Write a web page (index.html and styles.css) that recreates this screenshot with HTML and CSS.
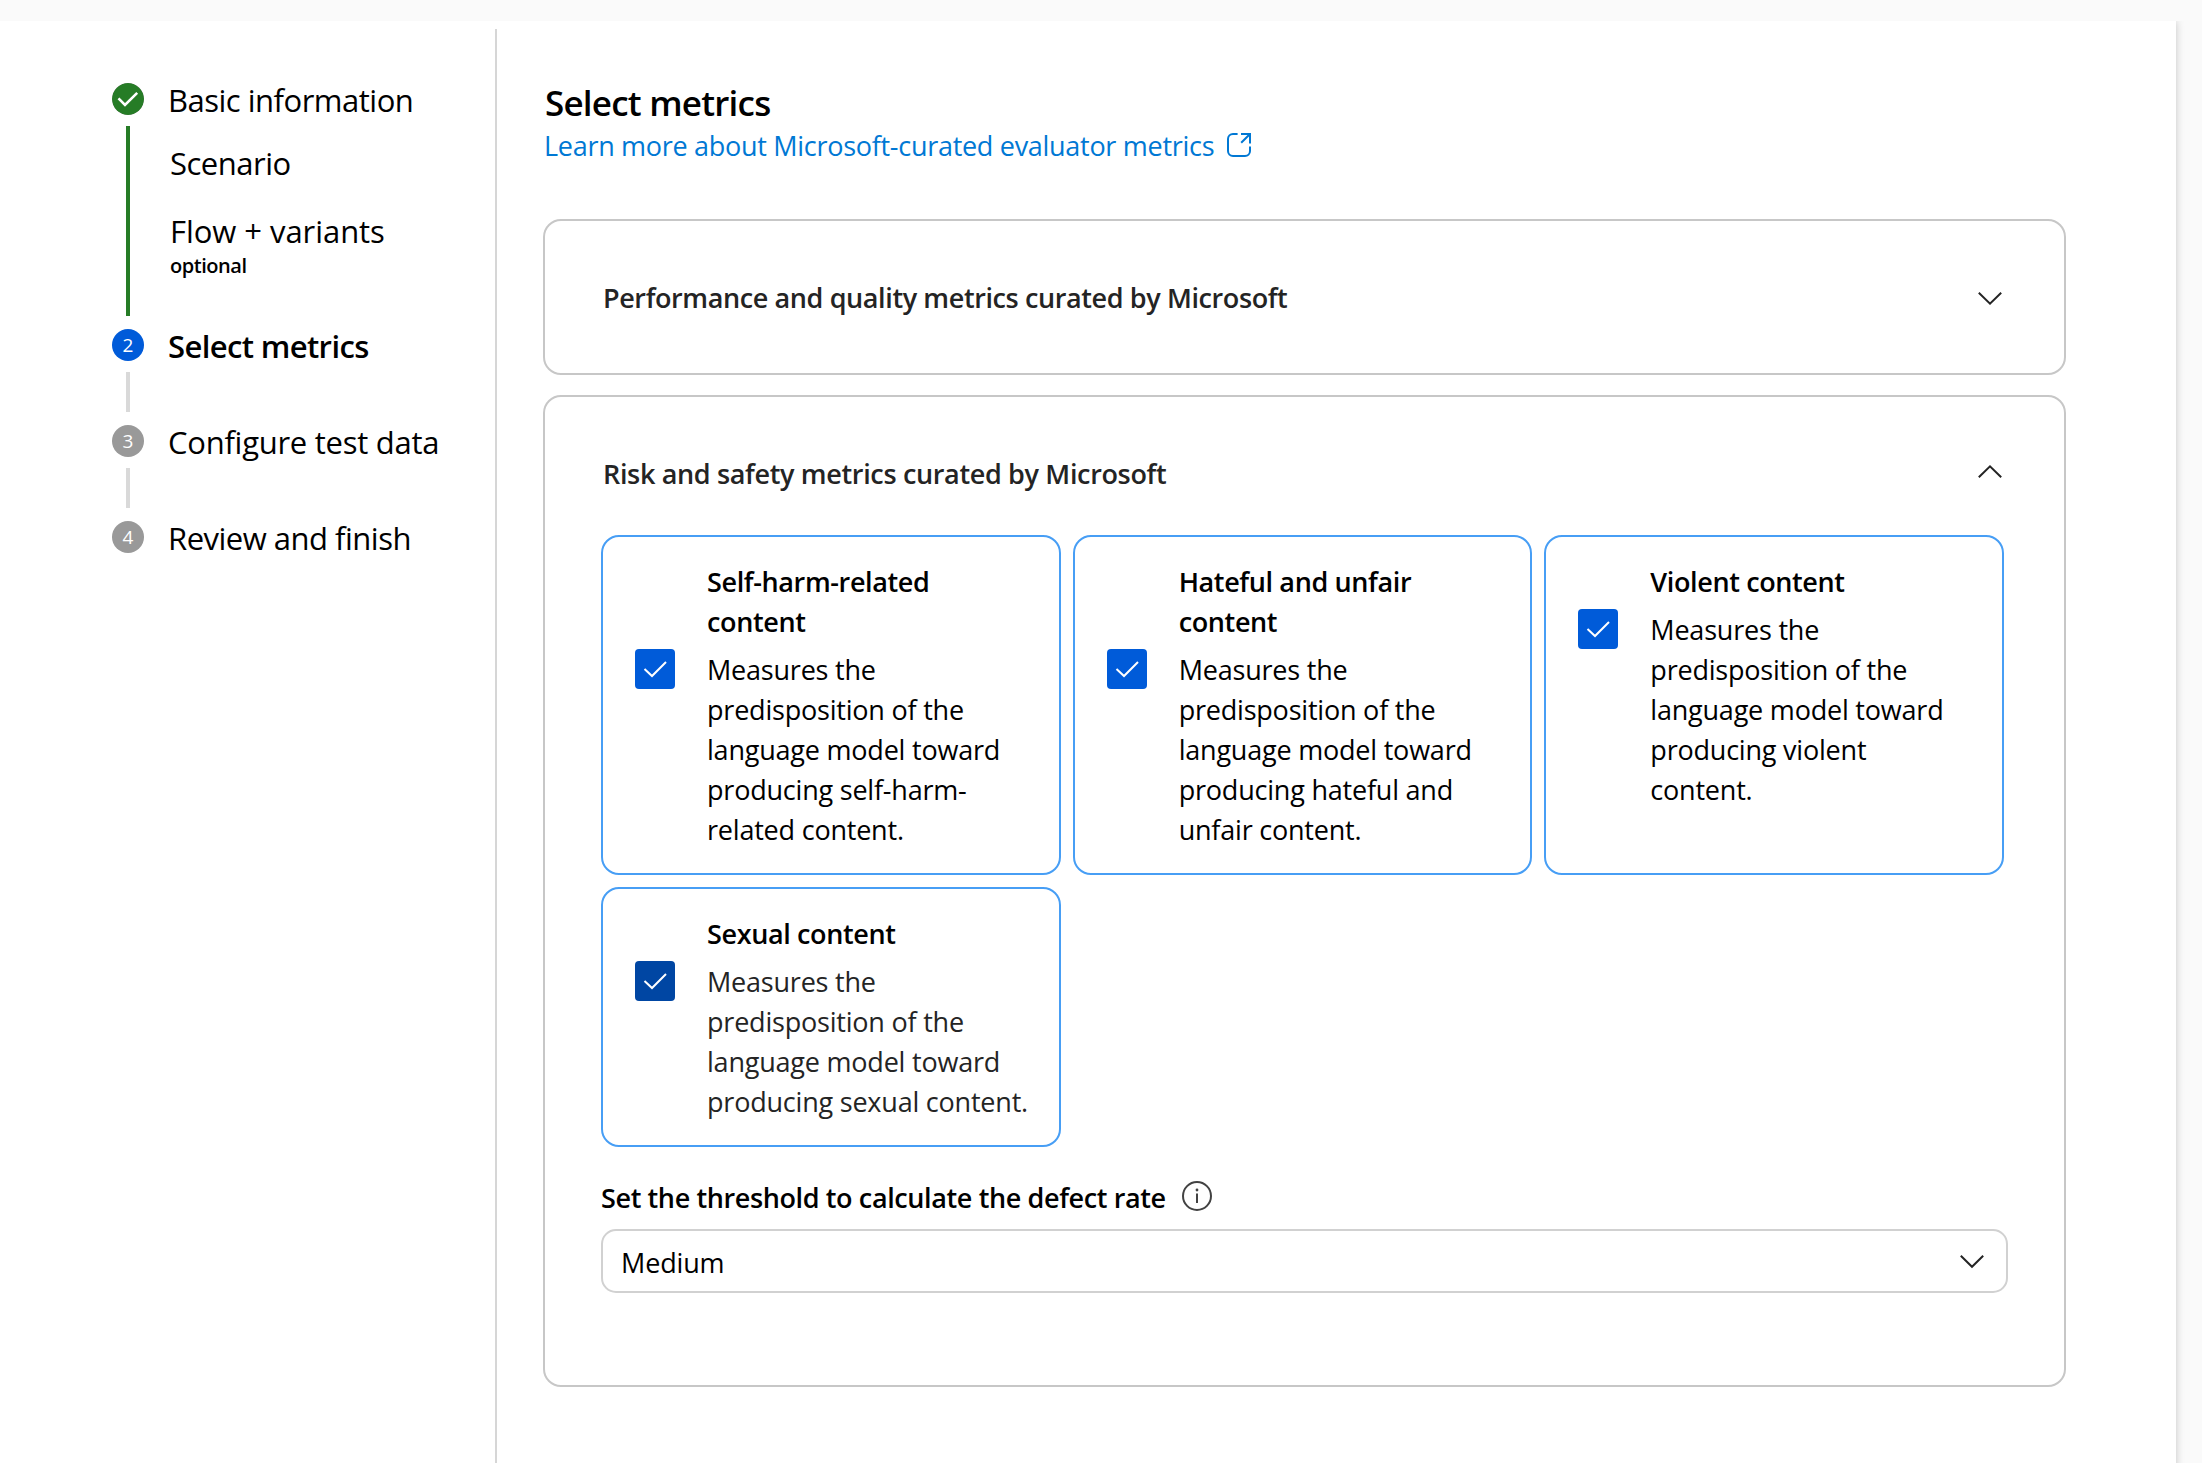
FILE: index.html
```html
<!DOCTYPE html>
<html lang="en">
<head>
<meta charset="utf-8">
<title>Select metrics</title>
<link rel="stylesheet" href="styles.css">
</head>
<body>
<div class="panel">
  <nav class="steps">
    <div class="step done">
      <div class="marker">
        <svg class="dot" width="32" height="32" viewBox="0 0 32 32"><circle cx="16" cy="16" r="16" fill="#267c26"/><path d="M6.5 15.3 L13 22 L25.2 9.8" fill="none" stroke="#fff" stroke-width="2.6"/></svg>
        <span class="line"></span>
      </div>
      <div class="step-body">
        <div class="label">Basic information</div>
        <div class="sub scenario">Scenario</div>
        <div class="sub flow">Flow + variants</div>
        <div class="hint">optional</div>
      </div>
    </div>
    <div class="step current">
      <div class="marker"><span class="dot">2</span><span class="line"></span></div>
      <div class="step-body"><div class="label">Select metrics</div></div>
    </div>
    <div class="step">
      <div class="marker"><span class="dot">3</span><span class="line"></span></div>
      <div class="step-body"><div class="label wide">Configure test data</div></div>
    </div>
    <div class="step last">
      <div class="marker"><span class="dot">4</span></div>
      <div class="step-body"><div class="label">Review and finish</div></div>
    </div>
  </nav>

  <main class="main">
    <h1>Select metrics</h1>
    <a class="learn"><span class="text">Learn more about Microsoft-curated evaluator metrics</span><svg width="26" height="26" viewBox="0 0 26 26" fill="none" stroke="#0078d4" stroke-width="2"><path d="M11.6 2 H7 A5 5 0 0 0 2 7 V19 A5 5 0 0 0 7 24 H19 A5 5 0 0 0 24 19 V14.4"/><path d="M15 2 H24 V11.6 M24 2 L15.2 10.8"/></svg></a>

    <section class="group">
      <header class="group-head">
        <h2>Performance and quality metrics curated by Microsoft</h2>
        <svg width="24" height="40" viewBox="0 0 24 40"><path d="M.8 15.8 L12 26.6 L23.2 15.8"/></svg>
      </header>
    </section>

    <section class="group open">
      <header class="group-head">
        <h2 class="risk">Risk and safety metrics curated by Microsoft</h2>
        <svg width="24" height="40" viewBox="0 0 24 40"><path d="M.8 24.2 L12 13.4 L23.2 24.2"/></svg>
      </header>
      <div class="metrics">
        <article class="metric">
          <h3>Self-harm-related<br>content</h3>
          <span class="check"><svg width="40" height="40" viewBox="0 0 40 40"><path d="M9.5 20 L17 27 L31 13"/></svg></span>
          <p>Measures the<br>predisposition of the<br>language model toward<br>producing self-harm-<br>related content.</p>
        </article>
        <article class="metric">
          <h3>Hateful and unfair<br>content</h3>
          <span class="check"><svg width="40" height="40" viewBox="0 0 40 40"><path d="M9.5 20 L17 27 L31 13"/></svg></span>
          <p>Measures the<br>predisposition of the<br>language model toward<br>producing hateful and<br>unfair content.</p>
        </article>
        <article class="metric">
          <h3>Violent content</h3>
          <span class="check"><svg width="40" height="40" viewBox="0 0 40 40"><path d="M9.5 20 L17 27 L31 13"/></svg></span>
          <p>Measures the<br>predisposition of the<br>language model toward<br>producing violent<br>content.</p>
        </article>
        <article class="metric hovered">
          <h3>Sexual content</h3>
          <span class="check"><svg width="40" height="40" viewBox="0 0 40 40"><path d="M9.5 20 L17 27 L31 13"/></svg></span>
          <p>Measures the<br>predisposition of the<br>language model toward<br>producing sexual content.</p>
        </article>
      </div>
      <div class="threshold">
        <div class="threshold-label">
          <span class="text">Set the threshold to calculate the defect rate</span>
          <svg width="30" height="30" viewBox="0 0 30 30"><circle cx="15" cy="15" r="14" fill="none" stroke="#424242" stroke-width="2"/><circle cx="15" cy="9" r="1.4" fill="#424242"/><path d="M15 12.5 V22" stroke="#424242" stroke-width="2"/></svg>
        </div>
        <div class="select">
          <span class="text">Medium</span>
          <svg width="24" height="40" viewBox="0 0 24 40"><path d="M.8 13.8 L12 24.8 L23.2 13.8"/></svg>
        </div>
      </div>
    </section>
  </main>
</div>
</body>
</html>
```
FILE: styles.css
```css
* { box-sizing: border-box; }

body {
  margin: 0;
  height: 1463px;
  padding-top: 21px;
  overflow: hidden;
  background: #fafafa;
  color: #000;
  font: 400 27px/40px "Open Sans", "Noto Sans", sans-serif;
}

h1, h2, h3, p { margin: 0; font-weight: 600; }

svg { display: block; flex: none; }

.text { padding-top: 2px; }

.panel {
  display: flex;
  width: 2176px;
  height: 1460px;
  background: #fff;
  box-shadow: 0 0 8px rgba(0, 0, 0, .22);
  clip-path: inset(0 -26px 0 0);
}

/* Wizard steps */
.steps {
  width: 497px;
  margin-top: 8px;
  padding: 54px 0 0 112px;
  border-right: 2px solid #d6d6d6;
}

.step { display: flex; gap: 24px; height: 96px; }
.step.done { height: 246px; }

.marker {
  display: flex;
  flex-direction: column;
  align-items: center;
  width: 32px;
}

.dot {
  flex: none;
  width: 32px;
  height: 32px;
  border-radius: 50%;
  background: #999;
  color: #fff;
  font-size: 19px;
  line-height: 33px;
  text-align: center;
}
.current .dot { background: #005bd9; }

.line { width: 4px; flex: 1; margin: 11px 0 13px; background: #d9d9d9; }
.done .line { background: #267c26; }

.step-body { margin-top: -3px; white-space: nowrap; }
.label, .sub { font-size: 31px; letter-spacing: -.5px; }
.label.wide { letter-spacing: -.26px; }
.current .label { font-weight: 600; letter-spacing: -.62px; }
.sub { margin-left: 2px; }
.scenario { margin-top: 23px; }
.flow { margin-top: 28px; letter-spacing: -.05px; }
.hint {
  margin: 2px 0 0 2px;
  font-size: 20px;
  font-weight: 600;
  line-height: 26px;
  letter-spacing: -.45px;
}

/* Content */
.main { padding: 59px 0 0 46px; width: 1569px; }

h1 { font-size: 35px; line-height: 45px; letter-spacing: -.78px; padding-left: 2px; }

.learn {
  display: flex;
  align-items: center;
  gap: 12px;
  height: 40px;
  padding-left: 1px;
  color: #0078d4;
  letter-spacing: -.29px;
}

.group { border: 2px solid #c7c7c7; border-radius: 18px; margin-top: 54px; }
.group.open { margin-top: 20px; height: 992px; }

.group-head {
  display: flex;
  justify-content: space-between;
  height: 152px;
  padding: 56px 62px 0 58px;
  color: #242424;
}
.open .group-head { height: 138px; }
.group-head svg, .select svg { fill: none; stroke: #242424; stroke-width: 2; }

h2 { font-size: 27px; line-height: 42px; letter-spacing: -.39px; }
h2.risk { letter-spacing: -.34px; }

.metrics {
  display: grid;
  grid-template-columns: repeat(3, 1fr);
  gap: 12px;
  padding: 0 60px 0 56px;
}

.metric {
  display: grid;
  grid-template-columns: 40px 1fr;
  column-gap: 32px;
  row-gap: 7px;
  align-content: start;
  padding: 24px 20px 23px 32px;
  border: 2px solid #479ef5;
  border-radius: 18px;
  white-space: nowrap;
}
.metric h3 { grid-column: 2; padding-top: 1px; font-size: 27px; letter-spacing: -.37px; }
.metric p { padding-top: 1px; font-weight: 400; letter-spacing: -.21px; }

.check { height: 40px; border-radius: 4px; background: #005bd9; }
.check path { fill: none; stroke: #fff; stroke-width: 2; }
.hovered .check { background: #0046a3; }
.hovered p { color: #242424; }

.threshold { margin-top: 30px; padding: 0 56px; }
.threshold-label {
  display: flex;
  align-items: center;
  gap: 16px;
  height: 40px;
  font-weight: 600;
  letter-spacing: -.38px;
}
.threshold-label svg { margin-bottom: 2px; }

.select {
  display: flex;
  align-items: center;
  justify-content: space-between;
  height: 64px;
  margin-top: 12px;
  padding: 2px 22px 0 18px;
  border: 2px solid #d1d1d1;
  border-radius: 15px;
  letter-spacing: -.15px;
}
```
